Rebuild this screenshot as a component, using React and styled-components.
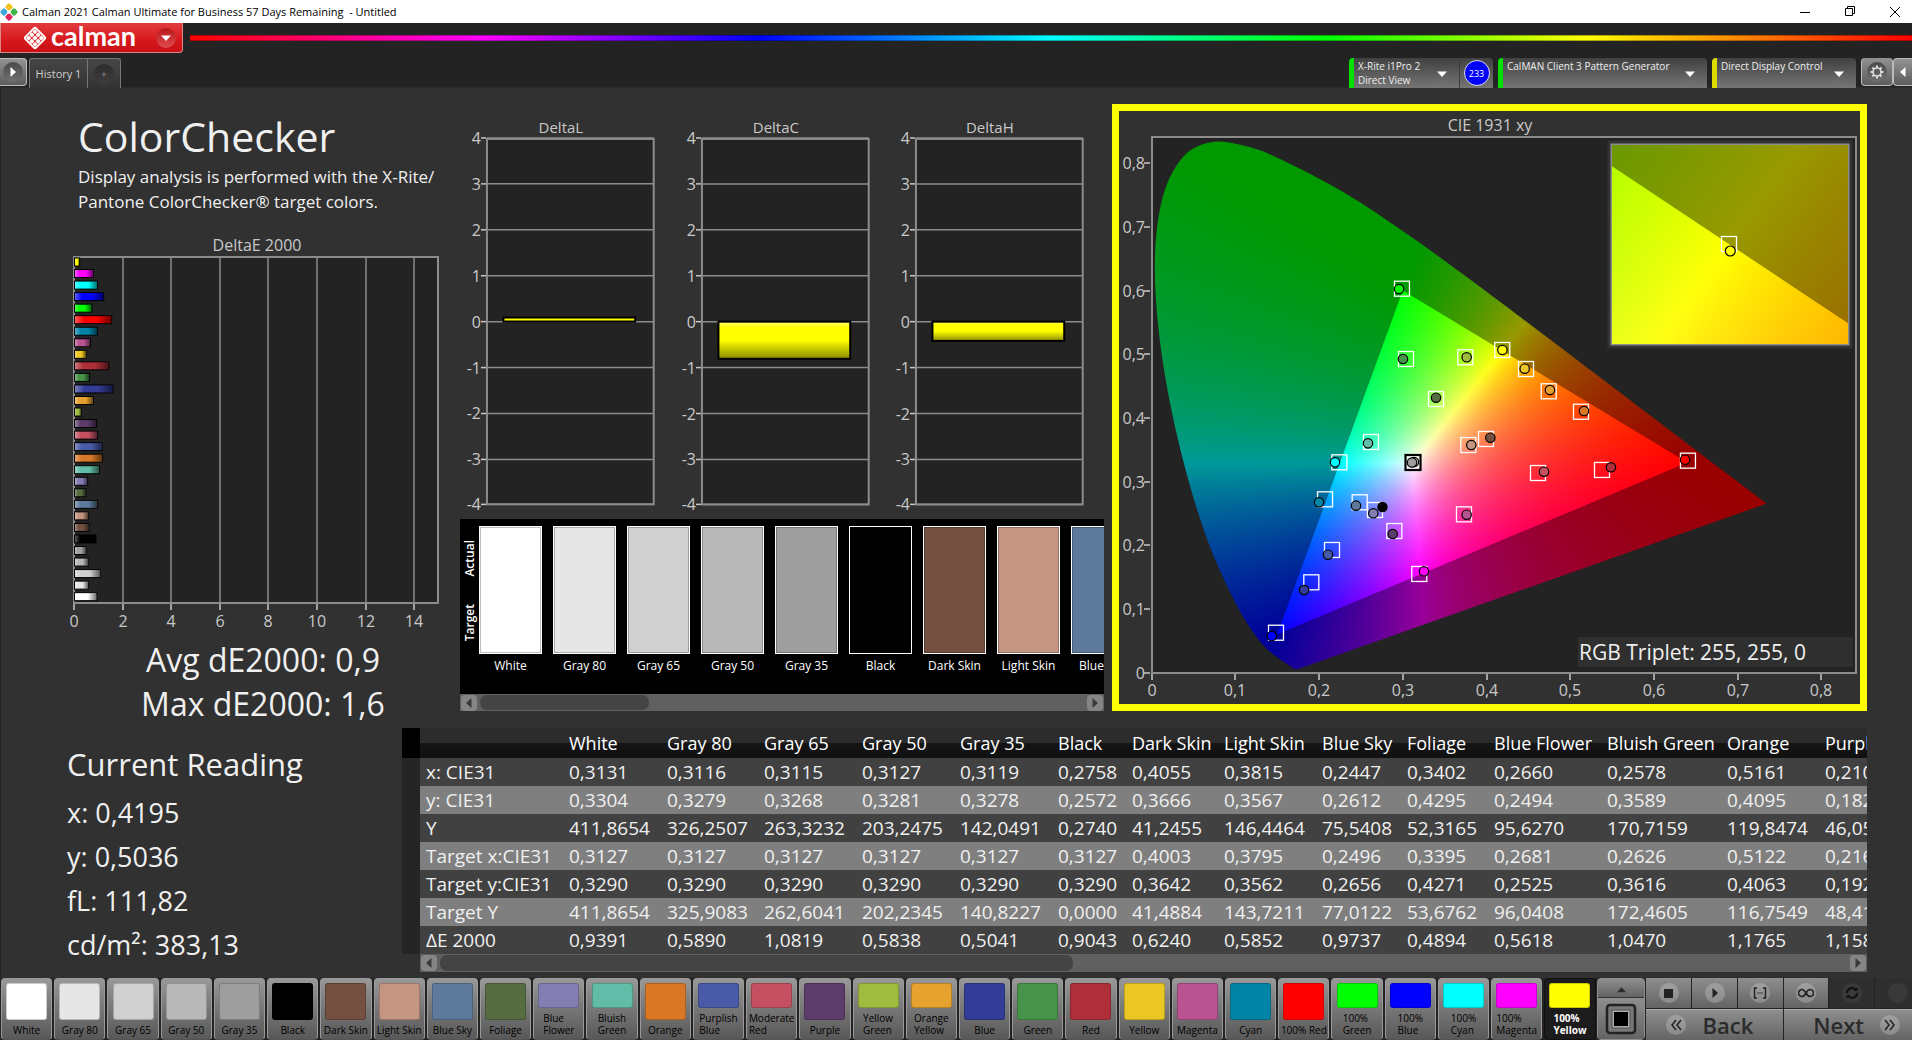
import React from 'react';
import styled, { createGlobalStyle, css } from 'styled-components';

const GlobalStyle = createGlobalStyle`
  * {
    box-sizing: border-box;
  }
  body {
    margin: 0;
    background: #313131;
    font-family: "Open Sans", "Noto Sans", sans-serif;
    color: #f0f0f0;
  }
  button {
    font-family: inherit;
    margin: 0;
    padding: 0;
    border: 0;
    color: inherit;
  }
`;

const PATCHES = [
    { name: 'White', color: '#ffffff', dE: 0.9391 },
    { name: 'Gray 80', color: '#e6e6e6', dE: 0.589 },
    { name: 'Gray 65', color: '#d0d0d1', dE: 1.0819 },
    { name: 'Gray 50', color: '#b9b9b9', dE: 0.5838 },
    { name: 'Gray 35', color: '#9e9e9e', dE: 0.5041 },
    { name: 'Black', color: '#000000', dE: 0.9043 },
    { name: 'Dark Skin', color: '#735040', dE: 0.624 },
    { name: 'Light Skin', color: '#c49580', dE: 0.5852 },
    { name: 'Blue Sky', color: '#5d7a9d', dE: 0.9737 },
    { name: 'Foliage', color: '#576c41', dE: 0.4894 },
    { name: 'Blue Flower', color: '#827eb2', dE: 0.5618, wrap: true },
    { name: 'Bluish Green', color: '#62bda8', dE: 1.047, wrap: true },
    { name: 'Orange', color: '#d87827', dE: 1.1765 },
    { name: 'Purplish Blue', color: '#495aa7', dE: 1.158, wrap: true },
    { name: 'Moderate Red', color: '#c55062', dE: 0.97, wrap: true },
    { name: 'Purple', color: '#5c3c6b', dE: 0.93 },
    { name: 'Yellow Green', color: '#9fbc3f', dE: 0.3, wrap: true },
    { name: 'Orange Yellow', color: '#e6a12e', dE: 0.8, wrap: true },
    { name: 'Blue', color: '#333c97', dE: 1.6 },
    { name: 'Green', color: '#47934a', dE: 0.64 },
    { name: 'Red', color: '#ae2f39', dE: 1.43 },
    { name: 'Yellow', color: '#ebc723', dE: 0.5 },
    { name: 'Magenta', color: '#ba5391', dE: 0.68 },
    { name: 'Cyan', color: '#0085a6', dE: 0.97 },
    { name: '100% Red', color: '#ff0000', dE: 1.55 },
    { name: '100% Green', color: '#00ff00', dE: 0.73, wrap: true },
    { name: '100% Blue', color: '#0000ff', dE: 1.22, wrap: true },
    { name: '100% Cyan', color: '#00ffff', dE: 0.97, wrap: true },
    { name: '100% Magenta', color: '#ff00ff', dE: 0.8, wrap: true },
    { name: '100% Yellow', color: '#ffff00', dE: 0.23, wrap: true },
];

const COLUMNS = [
    { name: 'White', width: 98 },
    { name: 'Gray 80', width: 97 },
    { name: 'Gray 65', width: 98 },
    { name: 'Gray 50', width: 98 },
    { name: 'Gray 35', width: 98 },
    { name: 'Black', width: 74 },
    { name: 'Dark Skin', width: 92 },
    { name: 'Light Skin', width: 98 },
    { name: 'Blue Sky', width: 85 },
    { name: 'Foliage', width: 87 },
    { name: 'Blue Flower', width: 113 },
    { name: 'Bluish Green', width: 120 },
    { name: 'Orange', width: 98 },
    { name: 'Purplish Blue', width: 130 },
];

const ROWS = [
    ['x: CIE31', '0,3131', '0,3116', '0,3115', '0,3127', '0,3119', '0,2758', '0,4055', '0,3815', '0,2447', '0,3402', '0,2660', '0,2578', '0,5161', '0,2101'],
    ['y: CIE31', '0,3304', '0,3279', '0,3268', '0,3281', '0,3278', '0,2572', '0,3666', '0,3567', '0,2612', '0,4295', '0,2494', '0,3589', '0,4095', '0,1825'],
    ['Y', '411,8654', '326,2507', '263,3232', '203,2475', '142,0491', '0,2740', '41,2455', '146,4464', '75,5408', '52,3165', '95,6270', '170,7159', '119,8474', '46,0512'],
    ['Target x:CIE31', '0,3127', '0,3127', '0,3127', '0,3127', '0,3127', '0,3127', '0,4003', '0,3795', '0,2496', '0,3395', '0,2681', '0,2626', '0,5122', '0,2160'],
    ['Target y:CIE31', '0,3290', '0,3290', '0,3290', '0,3290', '0,3290', '0,3290', '0,3642', '0,3562', '0,2656', '0,4271', '0,2525', '0,3616', '0,4063', '0,1922'],
    ['Target Y', '411,8654', '325,9083', '262,6041', '202,2345', '140,8227', '0,0000', '41,4884', '143,7211', '77,0122', '53,6762', '96,0408', '172,4605', '116,7549', '48,4117'],
    ['ΔE 2000', '0,9391', '0,5890', '1,0819', '0,5838', '0,5041', '0,9043', '0,6240', '0,5852', '0,9737', '0,4894', '0,5618', '1,0470', '1,1765', '1,1580'],
];

// target x, target y, measured x, measured y, colour of the measured dot
const POINTS = [
    [0.2990, 0.6030, 0.2955, 0.6025, '#00ff00'],
    [0.3038, 0.4925, 0.3002, 0.4925, '#47934a'],
    [0.3747, 0.4952, 0.3763, 0.4952, '#9fbc3f'],
    [0.4188, 0.5067, 0.4190, 0.5067, '#ffff00'],
    [0.3397, 0.4297, 0.3397, 0.4317, '#576c41'],
    [0.4472, 0.4768, 0.4456, 0.4773, '#ebc723'],
    [0.4743, 0.4418, 0.4758, 0.4438, '#e6a12e'],
    [0.5129, 0.4097, 0.5165, 0.4108, '#d87827'],
    [0.2620, 0.3621, 0.2584, 0.3600, '#62bda8'],
    [0.2242, 0.3302, 0.2190, 0.3302, '#00ffff'],
    [0.2071, 0.2721, 0.1999, 0.2674, '#0085a6'],
    [0.2485, 0.2674, 0.2441, 0.2621, '#5d7a9d'],
    [0.2668, 0.2553, 0.2648, 0.2501, '#827eb2'],
    [0.2899, 0.2223, 0.2879, 0.2176, '#5c3c6b'],
    [0.2154, 0.1925, 0.2106, 0.1851, '#495aa7'],
    [0.1907, 0.1417, 0.1820, 0.1296, '#333c97'],
    [0.1485, 0.0625, 0.1434, 0.0573, '#0000ff'],
    [0.3197, 0.1548, 0.3253, 0.1590, '#ff00ff'],
    [0.3731, 0.2485, 0.3763, 0.2479, '#ba5391'],
    [0.3783, 0.3574, 0.3818, 0.3574, '#c49580'],
    [0.3994, 0.3669, 0.4046, 0.3689, '#735040'],
    [0.4615, 0.3134, 0.4687, 0.3155, '#c55062'],
    [0.5380, 0.3182, 0.5487, 0.3224, '#ae2f39'],
    [0.6407, 0.3328, 0.6372, 0.3343, '#ff0000'],
];

const LOCUS = [
    [0.1741, 0.0050], [0.1714, 0.0051], [0.1689, 0.0069], [0.1644, 0.0109], [0.1566, 0.0177],
    [0.1440, 0.0297], [0.1355, 0.0399], [0.1241, 0.0578], [0.1096, 0.0868], [0.0913, 0.1327],
    [0.0687, 0.2007], [0.0454, 0.2950], [0.0235, 0.4127], [0.0082, 0.5384], [0.0039, 0.6548],
    [0.0139, 0.7502], [0.0389, 0.8120], [0.0743, 0.8338], [0.1142, 0.8262], [0.1547, 0.8059],
    [0.2296, 0.7543], [0.3016, 0.6923], [0.3731, 0.6245], [0.4441, 0.5547], [0.5125, 0.4866],
    [0.5752, 0.4242], [0.6270, 0.3725], [0.6915, 0.3083], [0.7347, 0.2653],
];

const GAMUT = [[0.3, 0.6], [0.64, 0.33], [0.15, 0.06]];

const num = (v) => v.toFixed(1);

const xyToColor = (x, y, level) => {
    const z = 1 - x - y;
    const rgb = [
        3.2406 * x - 1.5372 * y - 0.4986 * z,
        -0.9689 * x + 1.8758 * y + 0.0415 * z,
        0.0557 * x - 0.2040 * y + 1.0570 * z,
    ].map(c => Math.max(0, c));
    const top = Math.max(...rgb);
    return `rgb(${rgb.map(c => Math.round((c / top) * level)).join(',')})`;
};

const smoothPath = (pts) => {
    let d = `M${num(pts[0][0])} ${num(pts[0][1])}`;
    for (let i = 0; i < pts.length - 1; i += 1) {
        const a = pts[Math.max(0, i - 1)];
        const b = pts[i];
        const c = pts[i + 1];
        const e = pts[Math.min(pts.length - 1, i + 2)];
        d += `C${num(b[0] + (c[0] - a[0]) / 6)} ${num(b[1] + (c[1] - a[1]) / 6)} `
            + `${num(c[0] - (e[0] - b[0]) / 6)} ${num(c[1] - (e[1] - b[1]) / 6)} `
            + `${num(c[0])} ${num(c[1])}`;
    }
    return `${d}Z`;
};

/* ---------- window frame ---------- */

const Shell = styled.div`
  display: flex;
  flex-direction: column;
  min-height: 100vh;
  overflow: hidden;
`;
const TitleBar = styled.header`
  display: flex;
  align-items: center;
  gap: 11px;
  height: 23px;
  background: #fff;
  color: #000;
`;
const WindowTitle = styled.h1`
  display: flex;
  flex: 1;
  align-items: center;
  gap: 4px;
  margin: 0;
  font-size: 11px;
  font-weight: 400;
  white-space: pre;
`;
const WindowButton = styled.button`
  display: grid;
  place-items: center;
  width: 34px;
  height: 23px;
  background: none;
`;
const BrandBar = styled.div`
  display: flex;
  gap: 7px;
  height: 35px;
  background: #232323;
`;
const BrandButton = styled.button`
  display: flex;
  align-items: center;
  width: 183px;
  height: 30px;
  padding: 0 6px 0 22px;
  border: 1px solid #d88;
  border-top: 0;
  border-radius: 0 0 4px 0;
  background: linear-gradient(#e23c3f, #d6181c 60%, #c81014);
  color: #fff;
`;
const BrandName = styled.span`
  flex: 1;
  margin-left: 4px;
  font: 700 27px/24px Lato, "Open Sans", sans-serif;
  text-align: left;
  padding-bottom: 3px;
`;
const Spectrum = styled.div`
  flex: 1;
  height: 6px;
  margin-top: 12px;
  border: 1px solid rgba(0, 0, 0, 0.3);
  border-width: 1px 0;
  background: linear-gradient(90deg, #f00, #f0f 17%, #00f 33%, #0ff 50%, #0f0 66%, #ff0 81%, #f00);
`;
const Knob = styled.span`
  display: grid;
  place-items: center;
  flex: none;
  width: 20px;
  height: 20px;
  border-radius: 50%;
  background: ${props => props.$tone || 'linear-gradient(#4a4a4a, #707070)'};
`;

/* ---------- tabs ---------- */

const TabBar = styled.nav`
  display: flex;
  height: 30px;
  background: #232323;
  border-bottom: 1px solid #2a2a2a;
`;
const EdgeButton = styled.button`
  display: grid;
  place-items: center;
  width: ${props => props.$width}px;
  height: 28px;
  border: 1px solid #bbb;
  border-radius: ${props => props.$radius};
  border-${props => props.$open || 'top'}: 0;
  background: linear-gradient(#929292, #5c5c5c);
`;
const HistoryTab = styled.button`
  height: 30px;
  margin-left: 2px;
  width: 59px;
  border: 1px solid #777;
  border-bottom: 0;
  border-radius: 3px 0 0 0;
  background: linear-gradient(#464646, #333);
  color: #d0d0d0;
  font-size: 11px;
  white-space: nowrap;
`;
const AddTab = styled(HistoryTab)`
  display: grid;
  place-items: center;
  width: 33px;
  margin-left: 0;
  border-left: 0;
  border-radius: 0 3px 0 0;
  color: #888;
`;
const Spacer = styled.div`
  flex: 1;
`;
const Meter = styled.div`
  display: flex;
  width: ${props => props.$width}px;
  height: 30px;
  margin-right: 5px;
  border-left: 5px solid ${props => props.$status};
  border-radius: 4px 4px 0 0;
  background: linear-gradient(#414141, #757575);
`;
const MeterButton = styled.button`
  display: flex;
  flex: 1;
  align-items: flex-start;
  justify-content: space-between;
  padding: 1px 7px 0 4px;
  background: none;
  color: #eee;
  font-size: 10px;
  line-height: 14px;
  text-align: left;
  white-space: pre;

  ${Knob} {
    margin-top: 5px;
  }
`;
const MeterCount = styled.button`
  display: grid;
  place-items: center;
  width: 34px;
  border-left: 1px solid #3c3c3c;
  background: none;

  span {
    display: grid;
    place-items: center;
    width: 26px;
    height: 26px;
    border: 1px solid #ddd;
    border-radius: 50%;
    background: #0000ff;
    color: #fff;
    font-size: 9px;
  }
`;

/* ---------- workspace ---------- */

const Workspace = styled.main`
  flex: 1;
  padding-right: 45px;
  border-left: 1px solid #262626;
  background: #313131;
`;
const UpperRow = styled.div`
  display: flex;
  min-height: 640px;
`;
const LowerRow = styled.div`
  display: flex;
`;
const Summary = styled.section`
  flex: none;
  width: 459px;
  padding: 24px 12px 0 65px;
`;
const PageTitle = styled.h2`
  margin: 0 0 4px 12px;
  font-size: 41px;
  line-height: 48px;
  font-weight: 400;
`;
const Intro = styled.p`
  margin: 0 0 21px 12px;
  font-size: 17px;
  line-height: 25px;
  white-space: nowrap;
`;
const ChartTitle = styled.h3`
  margin: 0;
  color: #c9c9c9;
  font-size: 16px;
  line-height: 20px;
  font-weight: 400;
  text-align: center;
`;
const Stat = styled.p`
  margin: 0;
  font-size: ${props => props.$size}px;
  line-height: 44px;
  text-align: ${props => props.$align || 'left'};
  white-space: nowrap;
`;
const Averages = styled.div`
  padding: 7px 0 0 12px;
`;
const Chart = styled.svg`
  display: block;
  width: 100%;
  height: auto;
  font-size: 16px;
  fill: #c9c9c9;
`;
const Middle = styled.section`
  flex: 644 1 0;
  min-width: 0;
  padding-top: 17px;
`;
const DeltaRow = styled.div`
  display: grid;
  grid-template-columns: repeat(3, 1fr);
`;
const CiePanel = styled.section`
  flex: 741 1 0;
  min-width: 0;
  align-self: flex-start;
  margin: 16px 0 0 8px;
  border: 7px solid #ffff00;
`;

/* ---------- swatches ---------- */

const SwatchPanel = styled.div`
  display: flex;
  height: 175px;
  padding-top: 7px;
  overflow: hidden;
  background: #000;
  color: #fff;
`;
const SideColumn = styled.div`
  display: flex;
  flex: none;
  flex-direction: column;
  justify-content: space-around;
  align-items: center;
  width: 19px;
  height: 128px;
  font-size: 12px;
  font-weight: 600;

  span {
    writing-mode: vertical-rl;
    transform: rotate(180deg);
  }
`;
const Swatch = styled.figure`
  flex: none;
  width: 63px;
  margin: 0 11px 0 0;
  text-align: center;
  font-size: 12px;
  line-height: 24px;
  white-space: nowrap;

  div {
    height: 128px;
    border: 1px solid #fff;
    background: ${props => props.$color};
    box-shadow: inset 0 0 0 1px rgba(0, 0, 0, 0.25);
  }
`;

/* ---------- scroll bar ---------- */

const ScrollTrack = styled.div`
  display: flex;
  align-items: center;
  height: ${props => props.$height}px;
  padding: 0 1px;
  background: #606060;
`;
const ScrollRail = styled.div`
  flex: 1;
  height: 100%;
  padding: 1px 3px;
`;
const ScrollThumb = styled.div`
  width: ${props => props.$size};
  height: 100%;
  border-radius: 7px;
  background: #444;
`;
const ScrollButton = styled.button`
  display: grid;
  place-items: center;
  width: 16px;
  height: 16px;
  border-radius: 4px;
  background: #858585;
`;

/* ---------- readings and table ---------- */

const Readings = styled.section`
  flex: none;
  width: 401px;
  padding: 14px 0 0 66px;
`;
const ReadingsTitle = styled.h2`
  margin: 0 0 5px;
  font-size: 31px;
  line-height: 44px;
  font-weight: 400;
`;
const TablePanel = styled.section`
  flex: 1;
  min-width: 0;
`;
const TableClip = styled.div`
  overflow: hidden;
`;
const DataTable = styled.table`
  width: 1600px;
  table-layout: fixed;
  border-collapse: collapse;
  font-size: 19px;

  th,
  td {
    padding: 0 0 0 6px;
    text-align: left;
    font-weight: 400;
    white-space: nowrap;
  }
`;
const HeadRow = styled.tr`
  height: 30px;
  background: linear-gradient(#2c2c2c 50%, #151515 51%, #101010);
  color: #fff;
  font-size: 18px;
  line-height: 30px;

  td:first-child {
    background: #000;
  }
`;
const BodyRow = styled.tr`
  height: 28px;
  line-height: 28px;
  background: ${props => (props.$light ? '#7f7f7f' : '#414141')};

  td:first-child {
    background: #252525;
  }
`;
const TableScroll = styled.div`
  margin-left: 18px;
`;

/* ---------- bottom bar ---------- */

const BottomBar = styled.footer`
  display: flex;
  height: 62px;
  background: #232323;
`;
const PatchStrip = styled.div`
  display: flex;
  flex: 1597 1 0;
  min-width: 0;
  gap: 2px;
  padding-left: 1px;
  padding-right: 2px;
`;
const PatchButton = styled.button`
  display: flex;
  flex: 1 1 0;
  flex-direction: column;
  align-items: center;
  justify-content: space-between;
  min-width: 0;
  padding: 4px 0 3px;
  border: 1px solid #9a9a9a;
  border-bottom-color: #555;
  border-radius: 4px;
  background: linear-gradient(#989898, #7d7d7d 40%, #585858);
  color: #000;
  font-size: 10px;
  line-height: 12px;
  white-space: nowrap;
  ${props => props.$active && css`
    border-color: #111;
    background: #1c1c1c;
    color: #fff;
    font-weight: 700;
  `}
`;
const PatchChip = styled.span`
  flex: none;
  width: 41px;
  height: ${props => (props.$short ? 25 : 37)}px;
  border: 1px solid rgba(0, 0, 0, 0.2);
  border-radius: 3px;
  background: ${props => props.$color};
`;
const PatchLabel = styled.span`
  text-align: left;
  white-space: pre;
`;
const WindowTools = styled.div`
  display: grid;
  grid-template-rows: 18px 1fr;
  gap: 1px;
  width: 48px;
  border: 1px solid #8d8d8d;
  border-radius: 4px;
  background: #333;
`;
const ToolButton = styled.button`
  display: grid;
  place-items: center;
  background: ${props => (props.$off ? '#2e2e2e' : 'linear-gradient(#8e8e8e, #636363)')};
`;
const Transport = styled.div`
  display: grid;
  grid-template-rows: 30px 31px;
  gap: 1px;
  flex: 274 1 0;
  margin: 0 -8px 0 1px;
`;
const TransportRow = styled.div`
  display: grid;
  grid-template-columns: repeat(${props => props.$count}, 1fr);
  gap: 1px;
`;
const StepButton = styled.button`
  display: flex;
  align-items: center;
  justify-content: ${props => props.$align};
  gap: 16px;
  padding: 0 20px;
  border-top: 1px solid #aaa;
  background: linear-gradient(#8e8e8e, #646464);
  color: #2a2a2a;
  font-size: 22px;
  font-weight: 600;
  line-height: 28px;
`;

const LIGHT = 'linear-gradient(#a0a0a0, #8a8a8a)';

const Arrow = ({ dir = 'down', color = '#fff', size = 10 }) => {
    const paths = {
        down: 'M0 2.5h10L5 8z',
        up: 'M0 8h10L5 2.5z',
        left: 'M7.5 0v10L2 5z',
        right: 'M2.5 0v10L8 5z',
    };
    return (
        <svg width={size} height={size} viewBox="0 0 10 10" aria-hidden="true">
            <path d={paths[dir]} fill={color} />
        </svg>
    );
};

const AppIcon = () => (
    <svg width="18" height="18" viewBox="0 0 18 18" aria-hidden="true">
        <rect x="6" y="1" width="6" height="6" rx="1.5" transform="rotate(45 9 4)" fill="#f4c020" />
        <rect x="1" y="6" width="6" height="6" rx="1.5" transform="rotate(45 4 9)" fill="#39a9e0" />
        <rect x="11" y="6" width="6" height="6" rx="1.5" transform="rotate(45 14 9)" fill="#3db54a" />
        <rect x="6" y="11" width="6" height="6" rx="1.5" transform="rotate(45 9 14)" fill="#e0245e" />
        <rect x="7.5" y="7.5" width="3" height="3" transform="rotate(45 9 9)" fill="#fff" />
    </svg>
);

const BrandIcon = () => (
    <svg width="24" height="24" viewBox="0 0 24 24" aria-hidden="true">
        <g transform="rotate(45 12 12)" fill="#fff">
            <rect x="3.5" y="3.5" width="17" height="17" rx="2.5" />
            <rect x="5.3" y="5.3" width="13.4" height="13.4" rx="1" fill="#d92327" />
            {[5.6, 10.1, 14.6].map(x => [5.6, 10.1, 14.6].map(y => (
                <rect key={`${x}-${y}`} x={x} y={y} width="3.8" height="3.8" rx="1" />
            )))}
        </g>
    </svg>
);

const GearIcon = () => (
    <svg width="14" height="14" viewBox="0 0 14 14" fill="none" stroke="#ddd" aria-hidden="true">
        <circle cx="7" cy="7" r="4" strokeWidth="1.6" />
        {[0, 45, 90, 135, 180, 225, 270, 315].map(a => (
            <path key={a} d="M7 0.6v2.4" strokeWidth="2" transform={`rotate(${a} 7 7)`} />
        ))}
    </svg>
);

const ScrollBar = ({ height, size }) => (
    <ScrollTrack $height={height}>
        <ScrollButton aria-label="Scroll left"><Arrow dir="left" color="#3a3a3a" /></ScrollButton>
        <ScrollRail><ScrollThumb $size={size} /></ScrollRail>
        <ScrollButton aria-label="Scroll right"><Arrow dir="right" color="#3a3a3a" /></ScrollButton>
    </ScrollTrack>
);

const DeltaEChart = () => {
    const unit = 24.3;
    const bars = [...PATCHES].reverse();
    return (
        <Chart viewBox="0 0 382 376">
            <defs>
                <linearGradient id="barShade">
                    <stop offset="0" stopColor="#fff" stopOpacity="0.35" />
                    <stop offset="0.25" stopColor="#fff" stopOpacity="0" />
                    <stop offset="0.6" stopColor="#000" stopOpacity="0" />
                    <stop offset="1" stopColor="#000" stopOpacity="0.55" />
                </linearGradient>
            </defs>
            <rect x="8" y="2" width="364" height="346" fill="#232323" stroke="#8c8c8c" strokeWidth="2" />
            {[2, 4, 6, 8, 10, 12, 14].map(v => (
                <path key={v} d={`M${Math.round(8 + v * unit)} 2v346`} stroke="#8c8c8c" strokeWidth="1.5" />
            ))}
            {bars.map((p, i) => (
                <g key={p.name}>
                    <rect x="8.5" y={3 + i * 11.54} width={p.dE * unit - 0.5} height="8" fill={p.color} stroke="#000" />
                    <rect x="9" y={3.5 + i * 11.54} width={p.dE * unit - 1.5} height="7" fill="url(#barShade)" />
                </g>
            ))}
            {[0, 2, 4, 6, 8, 10, 12, 14].map(v => (
                <g key={v}>
                    <path d={`M${Math.round(8 + v * unit)} 349v6`} stroke="#c9c9c9" strokeWidth="1.5" />
                    <text x={Math.round(8 + v * unit)} y="372" textAnchor="middle">{v}</text>
                </g>
            ))}
        </Chart>
    );
};

const DeltaChart = ({ name, value }) => {
    const zero = 217;
    const unit = 45.9;
    const top = value > 0 ? zero - value * unit : zero;
    return (
        <Chart viewBox="0 0 215 415">
            <defs>
                <linearGradient id={`shade${name}`} x2="0" y2="1">
                    <stop offset="0" stopColor="#ffff80" />
                    <stop offset="0.15" stopColor="#ffff00" />
                    <stop offset="0.5" stopColor="#ffff00" />
                    <stop offset="1" stopColor="#8a8a00" />
                </linearGradient>
            </defs>
            <text x="101" y="28" textAnchor="middle" fontSize="15">{name}</text>
            <rect x="27" y="34" width="167" height="366" fill="#232323" stroke="#8c8c8c" strokeWidth="2" />
            {[4, 3, 2, 1, 0, -1, -2, -3, -4].map(v => {
                const y = Math.min(400, Math.round(zero - v * unit));
                return (
                    <g key={v}>
                        <path d={`M27 ${y}h167`} stroke="#8c8c8c" strokeWidth="1.5" />
                        <path d={`M21 ${y}h5`} stroke="#c9c9c9" strokeWidth="1.5" />
                        <text x="21" y={y + 6} textAnchor="end">{v}</text>
                    </g>
                );
            })}
            <rect x="43.5" y={top} width="132" height={Math.abs(value) * unit} fill={`url(#shade${name})`} stroke="#000" strokeWidth="2" />
        </Chart>
    );
};

// Paints chromaticity colours as thin rows, each with its own horizontal gradient.
const ColorField = ({ id, box, view, level, stops, step }) => {
    const rows = [];
    for (let y = box.y; y < box.y + box.h; y += step) {
        rows.push(y);
    }
    const marks = Array.from({ length: stops + 1 }, (_, i) => i / stops);
    return (
        <g shapeRendering="crispEdges">
            <defs>
                {rows.map((y, r) => (
                    <linearGradient key={y} id={`${id}${r}`}>
                        {marks.map(m => (
                            <stop
                                key={m}
                                offset={m}
                                stopColor={xyToColor(...view.invert(box.x + m * box.w, y + step / 2), level)}
                            />
                        ))}
                    </linearGradient>
                ))}
            </defs>
            {rows.map((y, r) => (
                <rect key={y} x={box.x} y={y} width={box.w} height={step} fill={`url(#${id}${r})`} />
            ))}
        </g>
    );
};

const makeView = (ox, oy, sx, sy, cx = 0, cy = 0) => ({
    point: (x, y) => [ox + (x - cx) * sx, oy - (y - cy) * sy],
    invert: (px, py) => [cx + (px - ox) / sx, cy + (oy - py) / sy],
});

const mainView = makeView(32.7, 561.5, 837, 636.5);
const zoomView = makeView(610, 133, 4800, 4020, 0.4193, 0.5053);

const toPoints = (pts, view) => pts.map(([x, y]) => view.point(x, y).map(num).join(',')).join(' ');

const Target = ({ cx, cy }) => (
    <rect x={cx - 7.5} y={cy - 7.5} width="15" height="15" fill="none" stroke="#fff" strokeWidth="1.3" />
);

const CieChart = () => (
    <Chart viewBox="0 0 741 593">
        <defs>
            <clipPath id="locus">
                <path d={smoothPath(LOCUS.map(([x, y]) => mainView.point(x, y)))} />
            </clipPath>
            <clipPath id="gamut">
                <polygon points={toPoints(GAMUT, mainView)} />
            </clipPath>
            <clipPath id="zoomGamut">
                <polygon points={toPoints(GAMUT, zoomView)} />
            </clipPath>
            <clipPath id="zoomFrame">
                <rect x="493" y="34" width="236" height="199" />
            </clipPath>
        </defs>
        <text x="371" y="20" textAnchor="middle">CIE 1931 xy</text>
        <rect x="33" y="26" width="704" height="536" fill="#232323" stroke="#8c8c8c" strokeWidth="2" />
        <g clipPath="url(#locus)">
            <ColorField id="outer" box={{ x: 34, y: 27, w: 630, h: 534 }} view={mainView} level={153} stops={63} step={3} />
        </g>
        <g clipPath="url(#gamut)">
            <ColorField id="inner" box={{ x: 150, y: 177, w: 430, h: 348 }} view={mainView} level={255} stops={86} step={2} />
        </g>
        {POINTS.map(([tx, ty]) => {
            const [cx, cy] = mainView.point(tx, ty);
            return <Target key={tx} cx={cx} cy={cy} />;
        })}
        {POINTS.map(([tx, , mx, my, color]) => {
            const [cx, cy] = mainView.point(mx, my);
            return <circle key={tx} cx={cx} cy={cy} r="4.7" fill={color} stroke="#000" strokeWidth="1.2" />;
        })}
        <circle cx="263.5" cy="396" r="5.2" fill="#000" />
        <rect x="286.5" y="344" width="15" height="15" fill="#fff" fillOpacity="0.6" stroke="#000" strokeWidth="2.2" />
        <circle cx="295" cy="351" r="4.7" fill="#bbb" stroke="#000" strokeWidth="1.2" />
        <circle cx="293" cy="351.5" r="4.7" fill="#9e9e9e" stroke="#000" strokeWidth="1.2" />

        {[0, 0.1, 0.2, 0.3, 0.4, 0.5, 0.6, 0.7, 0.8].map(v => {
            const px = Math.round(mainView.point(v, 0)[0]);
            const py = Math.round(mainView.point(0, v)[1]);
            const label = v === 0 ? '0' : v.toFixed(1).replace('.', ',');
            return (
                <g key={v}>
                    <path d={`M${px} 563v6M25 ${py}h6`} stroke="#c9c9c9" strokeWidth="1.5" />
                    <text x={px} y="585" textAnchor="middle">{label}</text>
                    <text x="26" y={py + 6} textAnchor="end">{label}</text>
                </g>
            );
        })}

        <rect x="490" y="31" width="242" height="205" fill="#8c8c8c" stroke="#333" strokeWidth="3" />
        <g clipPath="url(#zoomFrame)">
            <ColorField id="zoomOuter" box={{ x: 492, y: 33, w: 238, h: 201 }} view={zoomView} level={153} stops={24} step={3} />
            <g clipPath="url(#zoomGamut)">
                <ColorField id="zoomInner" box={{ x: 492, y: 33, w: 238, h: 201 }} view={zoomView} level={255} stops={24} step={3} />
            </g>
        </g>
        <Target cx={610} cy={133} />
        <circle cx="611.3" cy="140" r="5" fill="#ffff00" stroke="#000" strokeWidth="1.2" />

        <rect x="459" y="526" width="275" height="30" fill="#2f2f2f" />
        <text x="460" y="549" fontSize="21" fill="#f0f0f0">RGB Triplet: 255, 255, 0</text>
    </Chart>
);

const Header = () => (
    <>
        <TitleBar>
            <WindowTitle>
                <AppIcon />
                <span>Calman 2021 Calman Ultimate for Business 57 Days Remaining  - Untitled</span>
            </WindowTitle>
            <WindowButton aria-label="Minimize">
                <svg width="10" height="10"><path d="M0 5.5h10" stroke="#000" /></svg>
            </WindowButton>
            <WindowButton aria-label="Restore">
                <svg width="11" height="11" fill="none" stroke="#000">
                    <path d="M0.5 2.5h7v7h-7zM2.5 2.5v-2h7v7h-2" />
                </svg>
            </WindowButton>
            <WindowButton aria-label="Close">
                <svg width="10" height="10"><path d="M0 0l10 10M10 0L0 10" stroke="#000" /></svg>
            </WindowButton>
        </TitleBar>
        <BrandBar>
            <BrandButton>
                <BrandIcon />
                <BrandName>calman</BrandName>
                <Knob $tone="linear-gradient(#b8181b, #e04a4c)"><Arrow /></Knob>
            </BrandButton>
            <Spectrum />
        </BrandBar>
        <TabBar>
            <EdgeButton $width={27} $radius="0 4px 4px 0" $open="left" aria-label="Show panel">
                <Knob><Arrow dir="right" /></Knob>
            </EdgeButton>
            <HistoryTab>History 1</HistoryTab>
            <AddTab aria-label="Add history">
                <Knob $tone="linear-gradient(#2c2c2c, #3d3d3d)">+</Knob>
            </AddTab>
            <Spacer />
            <Meter $width={144} $status="#00e000">
                <MeterButton>{'X-Rite i1Pro 2\nDirect View'}<Knob><Arrow /></Knob></MeterButton>
                <MeterCount><span>233</span></MeterCount>
            </Meter>
            <Meter $width={209} $status="#00e000">
                <MeterButton>CalMAN Client 3 Pattern Generator<Knob><Arrow /></Knob></MeterButton>
            </Meter>
            <Meter $width={144} $status="#dcdc00">
                <MeterButton>Direct Display Control<Knob><Arrow /></Knob></MeterButton>
            </Meter>
            <EdgeButton $width={32} $radius="4px" aria-label="Settings">
                <Knob><GearIcon /></Knob>
            </EdgeButton>
            <EdgeButton $width={19} $radius="4px 0 0 4px" $open="right" aria-label="Show side panel">
                <Arrow dir="left" />
            </EdgeButton>
        </TabBar>
    </>
);

const ReadingsTable = () => (
    <TablePanel>
        <TableClip>
            <DataTable>
                <colgroup>
                    <col width="18" />
                    <col width="143" />
                    {COLUMNS.map(c => <col key={c.name} width={c.width} />)}
                    <col />
                </colgroup>
                <thead>
                    <HeadRow>
                        <td />
                        <td />
                        {COLUMNS.map(c => <th key={c.name} scope="col">{c.name}</th>)}
                        <td />
                    </HeadRow>
                </thead>
                <tbody>
                    {ROWS.map(([name, ...values], i) => (
                        <BodyRow key={name} $light={i % 2 === 1}>
                            <td />
                            <th scope="row">{name}</th>
                            {values.map((v, c) => <td key={COLUMNS[c].name}>{v}</td>)}
                            <td />
                        </BodyRow>
                    ))}
                </tbody>
            </DataTable>
        </TableClip>
        <TableScroll>
            <ScrollBar height={18} size="45%" />
        </TableScroll>
    </TablePanel>
);

const Footer = () => (
    <BottomBar>
        <PatchStrip>
            {PATCHES.map(p => (
                <PatchButton key={p.name} $active={p.name === '100% Yellow'}>
                    <PatchChip $color={p.color} $short={p.wrap} />
                    <PatchLabel>{p.wrap ? p.name.replace(' ', '\n') : p.name}</PatchLabel>
                </PatchButton>
            ))}
        </PatchStrip>
        <WindowTools>
            <ToolButton aria-label="Expand"><Knob $tone="none"><Arrow dir="up" color="#2a2a2a" size={9} /></Knob></ToolButton>
            <ToolButton aria-label="Pattern window">
                <svg width="32" height="32">
                    <rect x="2" y="2" width="28" height="28" rx="3" fill="#777" stroke="#222" strokeWidth="2.5" />
                    <rect x="7" y="7" width="18" height="18" fill="#aaa" stroke="#555" />
                    <rect x="9" y="9" width="14" height="14" fill="#000" />
                </svg>
            </ToolButton>
        </WindowTools>
        <Transport>
            <TransportRow $count={6}>
                <ToolButton aria-label="Stop">
                    <Knob $tone={LIGHT}><svg width="9" height="9"><rect width="9" height="9" fill="#222" /></svg></Knob>
                </ToolButton>
                <ToolButton aria-label="Play"><Knob $tone={LIGHT}><Arrow dir="right" color="#222" /></Knob></ToolButton>
                <ToolButton aria-label="Read series">
                    <Knob $tone={LIGHT}>
                        <svg width="14" height="12" fill="none" stroke="#222" strokeWidth="1.5">
                            <path d="M4 1H1.500v10H4M10 1h2.500v10H10M4.500 6h1M6.500 6h1M8.500 6h1" />
                        </svg>
                    </Knob>
                </ToolButton>
                <ToolButton aria-label="Continuous">
                    <Knob $tone={LIGHT}>
                        <svg width="16" height="10" fill="none" stroke="#222" strokeWidth="1.7">
                            <path d="M8 5C6.500 2.500 5.500 1.500 4 1.500a3.500 3.500 0 0 0 0 7C5.500 8.500 6.500 7.500 8 5s2.500-3.500 4-3.500a3.500 3.500 0 0 1 0 7C10.500 8.500 9.500 7.500 8 5z" />
                        </svg>
                    </Knob>
                </ToolButton>
                <ToolButton $off aria-label="Refresh">
                    <Knob $tone="#3a3a3a">
                        <svg width="14" height="14" fill="none" stroke="#111" strokeWidth="2">
                            <path d="M2 7a5 5 0 0 1 9-3M12 7a5 5 0 0 1-9 3" />
                            <path d="M12.500 1v4h-4zM1.500 13V9h4z" fill="#111" stroke="none" />
                        </svg>
                    </Knob>
                </ToolButton>
                <ToolButton $off aria-label="Record"><Knob $tone="#393939" /></ToolButton>
            </TransportRow>
            <TransportRow $count={2}>
                <StepButton $align="flex-start">
                    <Knob $tone={LIGHT}>
                        <svg width="12" height="12" fill="none" stroke="#222" strokeWidth="1.5"><path d="M6 1L2 6l4 5M11 1L7 6l4 5" /></svg>
                    </Knob>
                    Back
                </StepButton>
                <StepButton $align="flex-end">
                    Next
                    <Knob $tone={LIGHT}>
                        <svg width="12" height="12" fill="none" stroke="#222" strokeWidth="1.5"><path d="M1 1l4 5-4 5M6 1l4 5-4 5" /></svg>
                    </Knob>
                </StepButton>
            </TransportRow>
        </Transport>
    </BottomBar>
);

const App = () => (
    <Shell>
        <GlobalStyle />
        <Header />
        <Workspace>
            <UpperRow>
                <Summary>
                    <PageTitle>ColorChecker</PageTitle>
                    <Intro>
                        Display analysis is performed with the X-Rite/<br />
                        Pantone ColorChecker® target colors.
                    </Intro>
                    <ChartTitle>DeltaE 2000</ChartTitle>
                    <DeltaEChart />
                    <Averages>
                        <Stat $size={32} $align="center">Avg dE2000: 0,9</Stat>
                        <Stat $size={32} $align="center">Max dE2000: 1,6</Stat>
                    </Averages>
                </Summary>
                <Middle>
                    <DeltaRow>
                        <DeltaChart name="DeltaL" value={0.09} />
                        <DeltaChart name="DeltaC" value={-0.81} />
                        <DeltaChart name="DeltaH" value={-0.42} />
                    </DeltaRow>
                    <SwatchPanel>
                        <SideColumn><span>Actual</span><span>Target</span></SideColumn>
                        {PATCHES.slice(0, 9).map(p => (
                            <Swatch key={p.name} $color={p.color}>
                                <div />
                                <figcaption>{p.name}</figcaption>
                            </Swatch>
                        ))}
                    </SwatchPanel>
                    <ScrollBar height={17} size="28%" />
                </Middle>
                <CiePanel>
                    <CieChart />
                </CiePanel>
            </UpperRow>
            <LowerRow>
                <Readings>
                    <ReadingsTitle>Current Reading</ReadingsTitle>
                    <Stat $size={27}>x: 0,4195</Stat>
                    <Stat $size={27}>y: 0,5036</Stat>
                    <Stat $size={27}>fL: 111,82</Stat>
                    <Stat $size={27}>cd/m²: 383,13</Stat>
                </Readings>
                <ReadingsTable />
            </LowerRow>
        </Workspace>
        <Footer />
    </Shell>
);

export default App;
